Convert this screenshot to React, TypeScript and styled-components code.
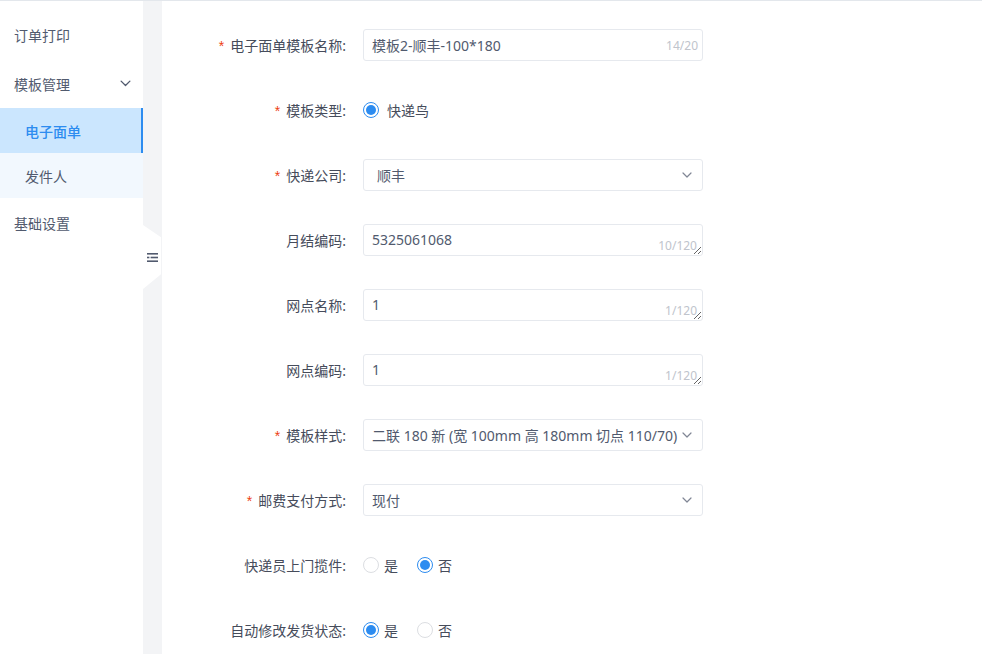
import React from 'react';
import styled, { createGlobalStyle, css } from 'styled-components';

const GlobalStyle = createGlobalStyle`
  html, body {
    margin: 0;
    padding: 0;
    background: #fff;
    font-family: "Noto Sans", "Noto Sans CJK SC", sans-serif;
    font-size: 14px;
    color: #464c5b;
  }
  * { box-sizing: border-box; }
`;

const Page = styled.div`
  display: flex;
  height: 100vh;
  border-top: 1px solid #e3e7ec;
  overflow: hidden;
`;

const Sidebar = styled.nav`
  width: 143px;
  flex: 0 0 143px;
  display: flex;
  flex-direction: column;
  padding-top: 9px;
  background: #fff;
`;

const MenuItem = styled.div<{ $sub?: boolean; $active?: boolean }>`
  display: flex;
  align-items: center;
  justify-content: space-between;
  height: ${(p) => (p.$sub ? 45 : 49)}px;
  padding: 0 12px 0 ${(p) => (p.$sub ? 25 : 14)}px;
  font-size: 14px;
  color: #515a6e;
  ${(p) =>
    p.$sub &&
    css`
      background: #f2f8fe;
    `}
  ${(p) =>
    p.$active &&
    css`
      background: #cbe6fe;
      color: #2d8cf0;
      font-weight: 500;
      border-right: 2px solid #2d8cf0;
    `}
`;

const Gutter = styled.div`
  position: relative;
  width: 19px;
  flex: 0 0 19px;
  background: #f3f4f6;
`;

const CollapseHandle = styled.button`
  position: absolute;
  left: 0;
  top: 224px;
  width: 18px;
  height: 64px;
  border: none;
  padding: 0;
  background: #fff;
  clip-path: polygon(0 0, 100% 19%, 100% 77%, 0 100%);
  display: flex;
  align-items: center;
  justify-content: center;
  cursor: pointer;
`;

const Main = styled.main`
  flex: 1;
  padding-top: 28px;
  background: #fff;
`;

const Form = styled.div`
  display: flex;
  flex-direction: column;
  gap: 33px;
`;

const Row = styled.div`
  display: flex;
  align-items: center;
  min-height: 32px;
`;

const Label = styled.label<{ $required?: boolean }>`
  width: 184px;
  flex: 0 0 184px;
  text-align: right;
  margin-right: 17px;
  color: #464c5b;
  font-size: 14px;
  &::before {
    content: ${(p) => (p.$required ? "'*'" : "''")};
    color: #ed4014;
    margin-right: 6px;
    font-family: "Liberation Sans", sans-serif;
  }
`;

const FieldBox = styled.div`
  position: relative;
  width: 340px;
  height: 32px;
`;

const TextInput = styled.input`
  width: 100%;
  height: 32px;
  border: 1px solid #e6e9ee;
  border-radius: 3px;
  padding: 0 50px 0 8px;
  font: inherit;
  font-size: 14px;
  color: #515a6e;
  background: #fff;
  outline: none;
`;

const TextArea = styled.textarea`
  display: block;
  width: 100%;
  height: 32px;
  min-height: 32px;
  border: 1px solid #e6e9ee;
  border-radius: 3px;
  padding: 4px 8px;
  font: inherit;
  font-size: 14px;
  line-height: 22px;
  color: #515a6e;
  background: #fff;
  outline: none;
  resize: vertical;
  overflow: hidden;
`;

const Counter = styled.span<{ $bottom?: boolean }>`
  position: absolute;
  right: ${(p) => (p.$bottom ? 6 : 5)}px;
  ${(p) =>
    p.$bottom
      ? css`
          bottom: 2px;
        `
      : css`
          top: 50%;
          transform: translateY(-50%);
        `}
  font-family: "Noto Sans", sans-serif;
  font-size: 12px;
  color: #c0c4cc;
  pointer-events: none;
`;

const Select = styled.div<{ $inset?: number }>`
  display: flex;
  align-items: center;
  justify-content: space-between;
  width: 340px;
  height: 32px;
  border: 1px solid #e6e9ee;
  border-radius: 3px;
  padding: 0 10px 0 ${(p) => p.$inset ?? 8}px;
  color: #515a6e;
  font-size: 14px;
  background: #fff;
  white-space: nowrap;
`;

const RadioGroup = styled.div`
  display: flex;
  align-items: center;
  gap: 19px;
`;

const RadioOption = styled.label<{ $gap?: number }>`
  display: flex;
  align-items: center;
  gap: ${(p) => p.$gap ?? 5}px;
  color: #464c5b;
  font-size: 14px;
`;

const RadioDot = styled.span<{ $checked?: boolean }>`
  position: relative;
  width: 16px;
  height: 16px;
  border-radius: 50%;
  border: 1px solid ${(p) => (p.$checked ? '#2d8cf0' : '#dcdee2')};
  background: #fff;
  &::after {
    content: '';
    position: absolute;
    inset: 2px;
    border-radius: 50%;
    background: ${(p) => (p.$checked ? '#2d8cf0' : 'transparent')};
  }
`;

const Chevron = ({ color = '#808695', size = 10 }: { color?: string; size?: number }) => (
  <svg width={size} height={size * 0.6} viewBox="0 0 10 6" fill="none">
    <path d="M1 1l4 4 4-4" stroke={color} strokeWidth="1.2" strokeLinecap="round" strokeLinejoin="round" />
  </svg>
);

const MenuIcon = () => (
  <svg width="11" height="9" viewBox="0 0 11 9" fill="none">
    <rect x="0" y="0" width="11" height="1.6" fill="#515a6e" />
    <rect x="0" y="3.7" width="2.4" height="1.6" fill="#515a6e" />
    <rect x="3.6" y="3.7" width="7.4" height="1.6" fill="#515a6e" />
    <rect x="0" y="7.4" width="11" height="1.6" fill="#515a6e" />
  </svg>
);

type RadioProps = { options: { label: string; checked?: boolean }[]; gap?: number };

const Radios = ({ options, gap }: RadioProps) => (
  <RadioGroup>
    {options.map((o) => (
      <RadioOption key={o.label} $gap={gap}>
        <RadioDot $checked={o.checked} />
        {o.label}
      </RadioOption>
    ))}
  </RadioGroup>
);

function App() {
  return (
    <>
      <GlobalStyle />
      <Page>
        <Sidebar>
          <MenuItem>订单打印</MenuItem>
          <MenuItem>
            模板管理
            <Chevron color="#515a6e" size={11} />
          </MenuItem>
          <MenuItem $sub $active>
            电子面单
          </MenuItem>
          <MenuItem $sub>发件人</MenuItem>
          <MenuItem>基础设置</MenuItem>
        </Sidebar>
        <Gutter>
          <CollapseHandle aria-label="collapse">
            <MenuIcon />
          </CollapseHandle>
        </Gutter>
        <Main>
          <Form>
            <Row>
              <Label $required>电子面单模板名称:</Label>
              <FieldBox>
                <TextInput readOnly value="模板2-顺丰-100*180" />
                <Counter>14/20</Counter>
              </FieldBox>
            </Row>
            <Row>
              <Label $required>模板类型:</Label>
              <Radios gap={8} options={[{ label: '快递鸟', checked: true }]} />
            </Row>
            <Row>
              <Label $required>快递公司:</Label>
              <Select $inset={13}>
                顺丰
                <Chevron />
              </Select>
            </Row>
            <Row>
              <Label>月结编码:</Label>
              <FieldBox>
                <TextArea readOnly value="5325061068" />
                <Counter $bottom>10/120</Counter>
              </FieldBox>
            </Row>
            <Row>
              <Label>网点名称:</Label>
              <FieldBox>
                <TextArea readOnly value="1" />
                <Counter $bottom>1/120</Counter>
              </FieldBox>
            </Row>
            <Row>
              <Label>网点编码:</Label>
              <FieldBox>
                <TextArea readOnly value="1" />
                <Counter $bottom>1/120</Counter>
              </FieldBox>
            </Row>
            <Row>
              <Label $required>模板样式:</Label>
              <Select>
                二联 180 新 (宽 100mm 高 180mm 切点 110/70)
                <Chevron />
              </Select>
            </Row>
            <Row>
              <Label $required>邮费支付方式:</Label>
              <Select>
                现付
                <Chevron />
              </Select>
            </Row>
            <Row>
              <Label>快递员上门揽件:</Label>
              <Radios options={[{ label: '是' }, { label: '否', checked: true }]} />
            </Row>
            <Row>
              <Label>自动修改发货状态:</Label>
              <Radios options={[{ label: '是', checked: true }, { label: '否' }]} />
            </Row>
          </Form>
        </Main>
      </Page>
    </>
  );
}

export default App;
